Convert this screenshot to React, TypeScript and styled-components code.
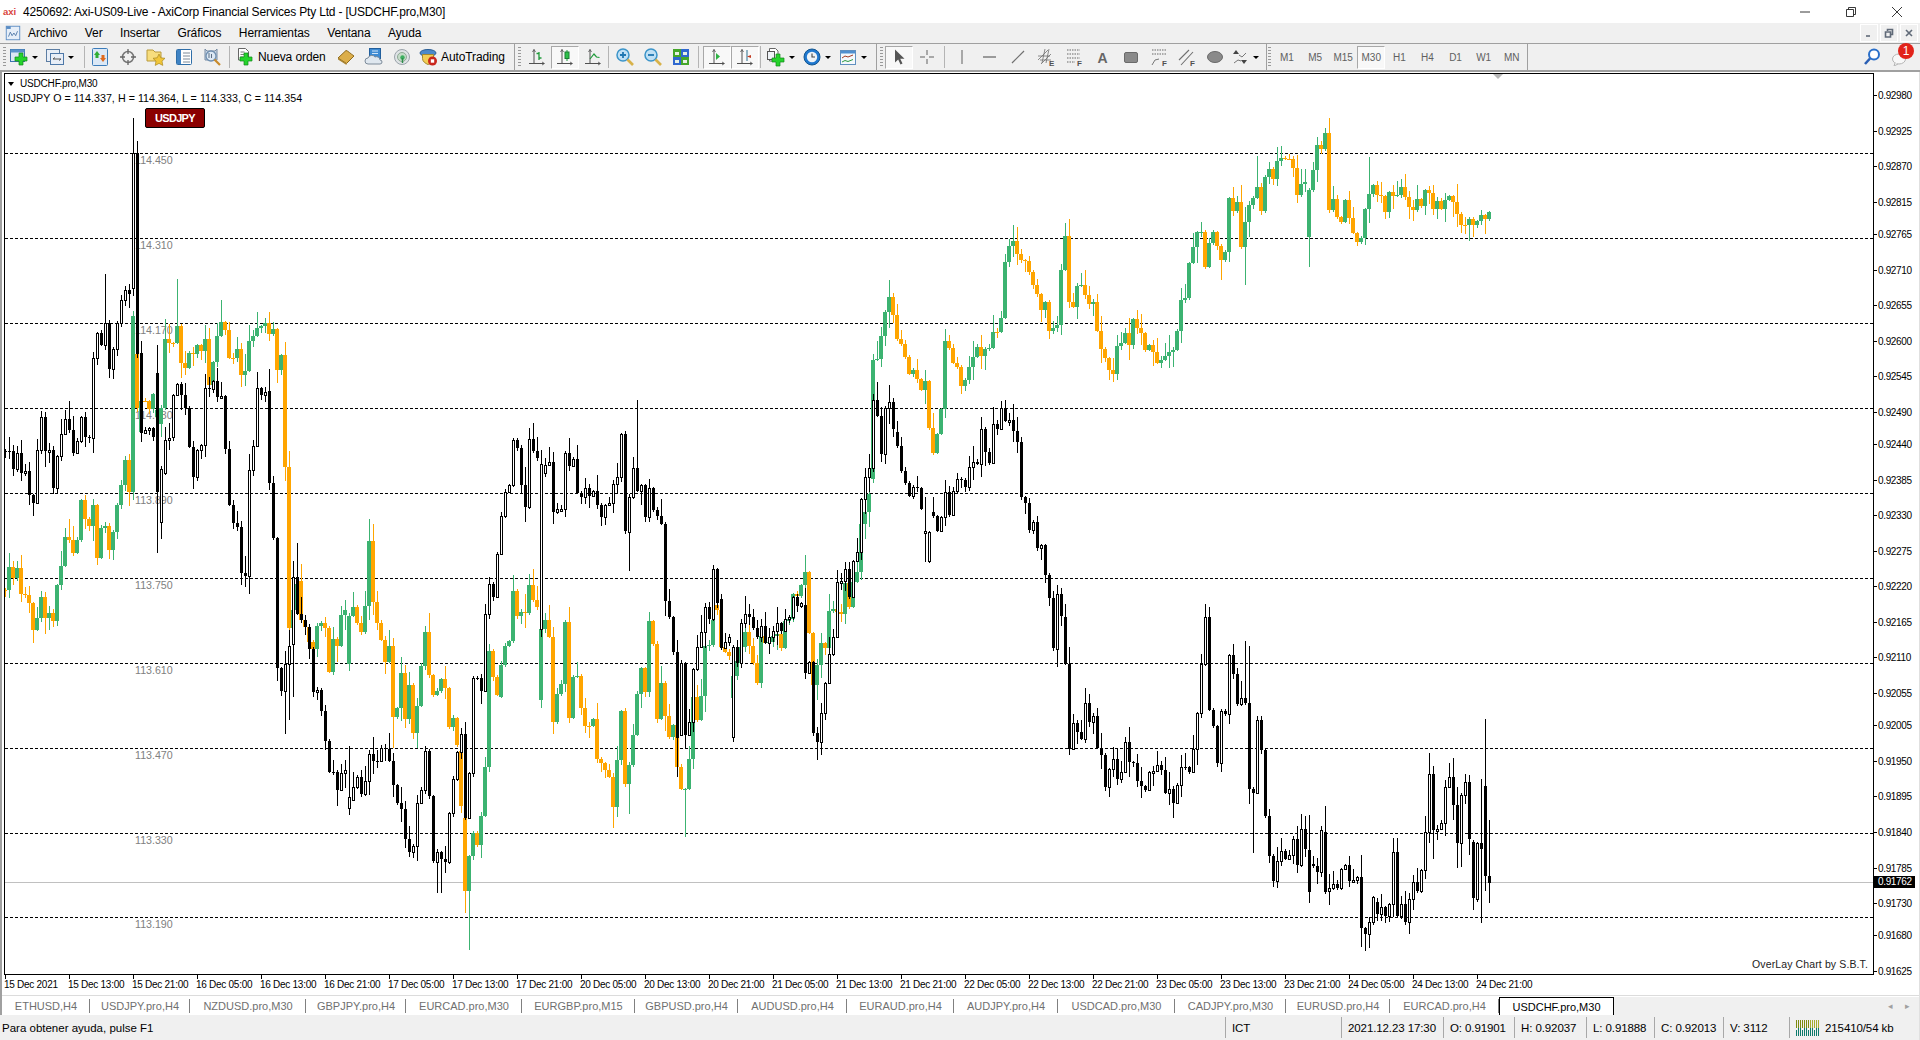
import React, { ReactNode } from 'react'
import styled, { createGlobalStyle } from 'styled-components'

const GlobalStyle = createGlobalStyle`
  html, body { margin: 0; padding: 0; background: #fff; }
  body { font-family: "Liberation Sans", Arial, sans-serif; color: #000; }
`

/* ---------- chart data ---------- */

type Cell = number | [number, number?, number?, number?] // close, open, high, low
type Bar = { x: number; c: number; o?: number; h?: number; l?: number }
const _ = undefined

// rows come from pixel reads of the chart: one bar every 4px, y scaled back to page pixels
const run = (firstX: number, y0: number, sy: number, rows: Cell[]): Bar[] =>
  rows.map((cell, i) => {
    const [c, o, h, l] = typeof cell === 'number' ? [cell] : cell
    const fix = (v?: number) => (v === undefined ? undefined : y0 + v / sy)
    return { x: firstX + 4 * i, c: fix(c)!, o: fix(o), h: fix(h), l: fix(l) }
  })

const rnd = (i: number) => {
  const v = Math.sin(i * 12.9898) * 43758.5453
  return v - Math.floor(v)
}

const colourMid = (): Bar[] => {
  const pts = [
    [716, 290], [722, 262], [726, 245], [730, 262], [735, 285], [740, 295], [750, 305], [755, 315], [762, 368],
    [768, 330], [772, 280], [778, 290], [785, 320], [790, 300], [800, 290], [810, 280], [818, 265], [822, 200],
    [826, 200], [832, 205], [838, 215], [845, 235], [850, 245], [856, 265], [862, 268], [870, 195], [874, 260],
    [880, 230], [888, 235], [895, 260], [900, 285], [905, 312], [912, 290], [920, 280], [928, 262], [935, 285],
    [945, 292], [955, 290], [962, 265], [968, 235], [975, 205], [978, 192],
  ].map(([x, y]) => [x * 1.2245, y * 1.2245])
  const bars: Bar[] = []
  for (let x = 877; x <= 1197; x += 4) {
    let j = 0
    while (j < pts.length - 2 && pts[j + 1][0] < x) j++
    const [x1, y1] = pts[j]
    const [x2, y2] = pts[j + 1]
    const y = y1 + ((y2 - y1) * (x - x1)) / (x2 - x1)
    bars.push({ x, c: y + (rnd(x) - 0.5) * 24 })
  }
  return bars
}

const colourBars: Bar[] = [
  ...run(5, 280, 2.306, [
    715, 662, 687, 665, 725, 727, 745, 807, 780, 730, 780, 768, 787, 703, 660, 593, 600, 630, 600, 507, 550, 567, 520,
    640, 573, 568, 622, 580, 520, 473, 415, 488, 82, [295, 170], [280, 350], 280, 298, 262, [300, 315], [295, 333],
    [137, _, 90], 145, 146, [105, _, -2], 192, 203, 168, 170, 150, 163, 135, 242, 188, 130, [97, _, 45], 115, 180, 181,
    160, 218, 210, 140, 130, 110, 105, 100, 125, 112, 207, 172, 432, 803, [760, 803], [700, 760], [785, 695], 800, 835,
    850, 797, 790, 803, 903, 828, 843, 772, 760, [775, 885], 755, 790, 812, 752, [602, _, 550], 742, 792, 830, 882, 845,
    [1007, _, _, 1080], 988, 907, 1013, 935, 1045, 982, 890, [812, _, 798], [910, _, 767], 957, 948, 920, 942, 1030,
    1010, 1073, [1213, 1085], [1410, 1240, _, 1460], [1328, _, _, 1545], 1275, 1302, 1235, 1122, 855, 915, 957,
    [888, 962], 845, 832, [718, _, 680], 775,
  ]),
  ...run(521, 380, 3, [
    697, 698, 615, 660, 680, [748, 960], 720, 770, 1025, 942, 912, 727, 1015, 892, 888, 985, 1037, 1038, 1018, 1138,
    1148, 1170, 1190, [1280, _, _, 1345], 1140, 993, 1212, [1155, _, _, 1303], 1065, 942, 865, 935, 723, 792, 1018, 910,
    1007, 1070, 1035, 1162, 1228, [1226, _, _, 1372], 1137, 950, 1020, 948, 797, 795, 720, [690, 675], 800, 815, 828,
    [888, 955], 843, [800, 850], 755, 797, 850, 908, 768, 790, 785, 768, 763, 803, 723, 718, 643, 648, 615, 575, 760,
    915, 855, 790, 805, 693, 688, 697, 702, 610, 680, 607, 575, 432, 397, 343, [-60, 297],
  ]),
  ...colourMid(),
  ...run(1201, 100, 3, [
    396, 500, 430, 396, 437, [480, _, _, 540], 455, 295, 333, 306, 440, [366, _, _, 555], 315, 294, [261, _, 168], 333, 232,
    207, 237, 183, [174, _, 138], 176, 177, 204, 285, 252, 246, [270, 410, _, 500], 210, 135, 147, [99, _, 85],
    [330, _, 55], 297, 350, 366, 300, 355, 399, 426, 415, 327, [282, _, 172], 255, 285, 287, 335, 276, 288, 284, 261,
    291, 321, 330, 297, 318, 270, 279, 327, 303, 327, 300, 288, 306, 342, 375, 375, 358, 375, 363, 345, 357, 336,
  ]),
]

const overlayBars: Bar[] = [
  ...run(5, 280, 2.306, [
    395, 395, 435, 400, 445, 440, 495, 515, 392, 315, 395, 392, 480, 405, 355, 320, 345, 400, 372, 315, 362, 365, 180,
    122, 150, [100, _, -14], 205, 160, 100, 46, 23, 32, [-293, 18, -374], [170, -293, -320], [352, 168], 345, 342, 362,
    [490, 215, 150, 630], [435, 557, _, 597], [368, 445], 365, [265, 362], 240, 265, 295, 385, 455, [392, 455], 380,
    250, 252, 232, 270, 268, 390, 520, 560, 570, 675, 682, [437, 682, _, 725], 383, 250, 265, 258, [468, 257, 205],
    595, 895, 947, [885, _, _, 1048], [845, _, _, 1015], [685, 840, _, 962], [770, 685, 607], 785, 800, 850, 950, 945,
    995, 1062, 1135, 1135, 1175, 1138, 1130, [1192, 1218, 1075], [1168, 1200], 1145, 1185, 1155, 1092, 1110, 1110,
    1080, 1082, 1110, 1165, 1205, 1220, 1288, 1318, 1305, 1205, 1175, 1085, 1190, 1340, [1320, 1342, _, 1413],
    [1335, 1320, _, 1413], 1343, 1228, 1150, 1088, 1048, [1240, 1048, 1020], 1138, 918, 918, 948, 770, 700, 730, 632,
    545, 490, 472, 368, 388,
  ]),
  ...run(521, 380, 3, [
    315, 380, 178, 212, 233, [253, 747], [255, 278], 247, 395, 388, 386, 220, 257, 238, 340, 352, 325, 347, 332, 375,
    410, 375, 370, 313, 292, 163, 452, [352, 455, _, 572], 265, [332, 265, 60], 316, 410, 325, 390, 407, 433, 662, 710,
    815, [1075, _, _, 1190], [850, 1065], [1065, 850], 1027, 868, 802, 757, 682, 718, 568, 668, [803, 658], 785, 770,
    [802, 1070, _, 1085], 848, 730, 703, 710, 743, 770, 737, 790, 770, 752, 730, 752, 718, 712, 650, 677, 670,
    [880, 676], 845, 1060, [1085, _, _, 1140], 1000, 910, 823, 770, 605, 604, 567, 650, 543, 515, 358, 292, 265, 60,
    107, 222, [85, 222], 67, 147, [197, 157], 272, 308, 347, 320, 325, 387, [452, 458, 350, 545], [457, 542], [407, 397],
    452, 412, 335, 405, 332, 298, 299, 320, 262, 247, 251, 148, 215, 248, 133, 147, 85, 122, 120, 152, 185,
  ]),
  ...run(1021, 0, 1, [[497, 442], 503, 530, 522, 548, 545, 575]),
  ...run(1049, 580, 3, [
    55, 205, [43, 208, _, 260], 107, [253, 112], 507, 428, 455, 477, 370, 425, 408, 503, 525, 620, 568, 538, 597, 575,
    487, 547, 548, 602, 617, 630, 575, 574, 556, 570, 638, 628, 670, 615, 562, 562, 575, 508, 400, 252,
    [112, _, 72], [390, _, 82], 437, 548, 392, 402, 225, 283, 372, 355, [368, _, 183], [627, 370, 198], [640, _, _, 818],
    420, 510, 707, 828, 902, 842, 812, 838, 826, 778, 855, 748, 808, [935, 810, 705, 968], [857, 853], 875, 750,
    [935, 755, 678], [925, 932, _, 975], 913, 923, 868, 855, 903, 899, 890, [1045, _, 825, 1100], [1063, _, _, 1112],
    1025, 952, [1002, 965], 980, 1008, 973, [817, _, 775], 1007, 973, 1025, 958, 907, 932, 870, [757, _, 708],
    [583, _, 520], [750, _, _, 838], 747, 730, 622, [590, _, 550], [675, _, 535], [788, _, _, 863], [645, _, _, 860], 607,
    [776, _, 585], [953, 787], [790, 958], [808, _, 597, 1028], [888, 618, 418], [908, _, 720, 968],
  ]),
]

const Candles = ({ bars, up, down, hollow }: { bars: Bar[]; up: string; down: string; hollow?: boolean }) => {
  let prev = bars[0].c
  return (
    <g shapeRendering="crispEdges">
      {bars.map((b, i) => {
        const x = 5 + 4 * Math.round((b.x - 5) / 4)
        const open = b.o ?? prev
        prev = b.c
        const top = Math.round(Math.min(open, b.c))
        const bottom = Math.round(Math.max(open, b.c))
        const rising = b.c < open
        const colour = hollow ? '#000' : rising ? up : down
        const high = Math.round(b.h ?? top - 1 - rnd(x + 0.3) ** 2 * 17)
        const low = Math.round(b.l ?? bottom + 1 + rnd(x + 0.7) ** 2 * 15)
        return (
          <g key={i}>
            <rect x={x} y={high} width={1} height={low - high} fill={colour} />
            {hollow ? (
              rising ? (
                <rect x={x - 0.5} y={top + 0.5} width={2} height={Math.max(bottom - top, 2)} fill="#fff" stroke="#000" />
              ) : (
                <rect x={x - 1} y={top} width={3} height={Math.max(bottom - top, 1)} fill={down} />
              )
            ) : (
              // the coloured series has touching bodies, 4px on a 4px step
              <rect x={x - 2} y={top} width={4} height={Math.max(bottom - top, 1)} fill={colour} />
            )}
          </g>
        )
      })}
    </g>
  )
}

const gridLines = [153, 238, 323, 408, 493, 578, 663, 748, 833, 917]
const overlayLabels = ['114.450', '114.310', '114.170', '114.030', '113.890', '113.750', '113.610', '113.470', '113.330', '113.190']

const prices = [
  '0.92980', '0.92925', '0.92870', '0.92815', '0.92765', '0.92710', '0.92655', '0.92600', '0.92545', '0.92490', '0.92440',
  '0.92385', '0.92330', '0.92275', '0.92220', '0.92165', '0.92110', '0.92055', '0.92005', '0.91950', '0.91895', '0.91840',
  '0.91785', '0.91730', '0.91680', '0.91625',
]
const priceTop = (p: string) => Math.round(832 + (0.9184 - parseFloat(p)) * 64651) - 73

const times = [
  '15 Dec 2021', '15 Dec 13:00', '15 Dec 21:00', '16 Dec 05:00', '16 Dec 13:00', '16 Dec 21:00', '17 Dec 05:00', '17 Dec 13:00',
  '17 Dec 21:00', '20 Dec 05:00', '20 Dec 13:00', '20 Dec 21:00', '21 Dec 05:00', '21 Dec 13:00', '21 Dec 21:00', '22 Dec 05:00',
  '22 Dec 13:00', '22 Dec 21:00', '23 Dec 05:00', '23 Dec 13:00', '23 Dec 21:00', '24 Dec 05:00', '24 Dec 13:00', '24 Dec 21:00',
]

const tabs: [string, number][] = [
  ['ETHUSD,H4', 88], ['USDJPY.pro,H4', 100], ['NZDUSD.pro,M30', 116], ['GBPJPY.pro,H4', 100], ['EURCAD.pro,M30', 116],
  ['EURGBP.pro,M15', 113], ['GBPUSD.pro,H4', 103], ['AUDUSD.pro,H4', 109], ['EURAUD.pro,H4', 107], ['AUDJPY.pro,H4', 104],
  ['USDCAD.pro,M30', 117], ['CADJPY.pro,M30', 111], ['EURUSD.pro,H4', 104], ['EURCAD.pro,H4', 109],
]

const statusCells: [string, number][] = [
  ['2021.12.23 17:30', 102], ['O: 0.91901', 71], ['H: 0.92037', 72], ['L: 0.91888', 68], ['C: 0.92013', 69], ['V: 3112', 66],
]

/* ---------- layout ---------- */

const Page = styled.div`
  width: 1920px;
  height: 1040px;
  display: flex;
  flex-direction: column;
  overflow: hidden;
  background: #fff;
`

const TitleBar = styled.div`
  height: 23px;
  display: flex;
  align-items: center;
  padding-left: 3px;
  font-size: 12px;
  background: #fff;
`

const AxiLogo = styled.span`
  width: 20px;
  font-size: 9.5px;
  font-weight: bold;
  color: #d9443c;
`

const TitleText = styled.span`
  flex: 1;
  letter-spacing: -0.19px;
`

const WindowControl = styled.button`
  width: 46px;
  height: 23px;
  border: 0;
  padding: 0;
  background: none;
  display: flex;
  align-items: center;
  justify-content: center;
`

const MenuBar = styled.div`
  height: 20px;
  display: flex;
  align-items: center;
  padding-left: 4px;
  background: #f0f0f0;
  border-bottom: 1px solid #a0a0a0;
  font-size: 12px;
`

const MenuItems = styled.div`
  flex: 1;
  display: flex;
  gap: 17.5px;
  padding-left: 6px;
  letter-spacing: -0.1px;
`

const MdiButton = styled.button`
  width: 18px;
  height: 18px;
  margin-right: 2px;
  border: 1px solid #fff;
  padding: 0;
  background: #f0f0f0;
  display: flex;
  align-items: center;
  justify-content: center;
`

const Toolbar = styled.div`
  height: 26px;
  display: flex;
  align-items: center;
  padding-left: 2px;
  background: #f0f0f0;
  border-bottom: 2px solid #a0a0a0;
  font-size: 12px;
`

const Grip = styled.i`
  width: 3px;
  height: 20px;
  margin: 0 2px 0 1px;
  flex: none;
  background: repeating-linear-gradient(#999 0 1px, #f0f0f0 1px 3px);
`

const Divider = styled.i<{ $ml: number; $mr: number; $strong?: boolean }>`
  width: 1px;
  height: ${(p) => (p.$strong ? 26 : 22)}px;
  flex: none;
  margin: 0 ${(p) => p.$mr}px 0 ${(p) => p.$ml}px;
  background: ${(p) => (p.$strong ? '#a0a0a0' : '#b4b4b4')};
`

const ToolButton = styled.div<{ $w?: number; $pressed?: boolean }>`
  width: ${(p) => p.$w ?? 28}px;
  height: 23px;
  box-sizing: border-box;
  display: flex;
  align-items: center;
  justify-content: center;
  flex: none;
  color: #606060;
  font-size: 10px;
  border: 1px solid ${(p) => (p.$pressed ? '#fff' : 'transparent')};
  border-top-color: ${(p) => (p.$pressed ? '#a8a8a8' : 'transparent')};
  border-left-color: ${(p) => (p.$pressed ? '#a8a8a8' : 'transparent')};
  background: ${(p) => (p.$pressed ? '#f8f8f8' : 'transparent')};
`

const LabelButton = styled.div<{ $w: number }>`
  width: ${(p) => p.$w}px;
  flex: none;
  display: flex;
  align-items: center;
  gap: 2px;
  padding-left: 3px;
  box-sizing: border-box;
  white-space: nowrap;
  letter-spacing: -0.1px;
`

const DropButton = styled.div<{ $w?: number }>`
  width: ${(p) => p.$w ?? 36}px;
  flex: none;
  display: flex;
  align-items: center;
  padding-left: 1px;
  box-sizing: border-box;
  gap: 3px;
`

const Caret = styled.i`
  width: 0;
  height: 0;
  border-left: 3px solid transparent;
  border-right: 3px solid transparent;
  border-top: 3px solid #000;
`

const ToolbarEnd = styled.div`
  margin-left: auto;
  display: flex;
  align-items: center;
  gap: 8px;
  padding-right: 8px;
`

const ChatButton = styled.div`
  position: relative;
  width: 22px;
  height: 22px;
`

const ChatBadge = styled.span`
  position: absolute;
  left: 8px;
  top: -3px;
  width: 16px;
  height: 16px;
  border-radius: 50%;
  background: #e2231a;
  color: #fff;
  font-size: 12px;
  line-height: 16px;
  text-align: center;
`

const ChartArea = styled.div`
  flex: 1;
  display: flex;
  flex-direction: column;
  padding-top: 1px;
  border-left: 2px solid #a0a0a0;
  border-right: 1px solid #e0e0e0;
`

const ChartRow = styled.div`
  display: flex;
  height: 902px;
  padding-left: 2px;
`

const ChartCanvas = styled.div`
  position: relative;
  width: 1868px;
  height: 900px;
  border: 1px solid #000;
  flex: none;
`

const ChartSvg = styled.svg`
  display: block;
`

const Legend = styled.div`
  position: absolute;
  left: 3px;
  top: 3px;
  font-size: 10.67px;
  line-height: 14px;
  letter-spacing: 0.05px;
`

const LegendTitle = styled.div`
  display: flex;
  align-items: center;
  gap: 6px;
  font-size: 10px;
  letter-spacing: -0.18px;

  &::before {
    content: '';
    border-left: 3.5px solid transparent;
    border-right: 3.5px solid transparent;
    border-top: 4px solid #000;
  }
`

const SymbolBadge = styled.div`
  position: absolute;
  left: 140px;
  top: 34px;
  width: 60px;
  height: 20px;
  box-sizing: border-box;
  border: 1px solid #000;
  border-radius: 2px;
  background: #8b0000;
  color: #fff;
  font-size: 11px;
  font-weight: bold;
  line-height: 18px;
  text-align: center;
  letter-spacing: -0.7px;
`

const ShiftMarker = styled.i`
  position: absolute;
  left: 1488px;
  top: 0;
  border-left: 5px solid transparent;
  border-right: 5px solid transparent;
  border-top: 5px solid #b8b8b8;
`

const Credit = styled.div`
  position: absolute;
  right: 5px;
  bottom: 4px;
  font-size: 10.5px;
  color: #222;
  letter-spacing: 0.12px;
`

const PriceAxis = styled.div`
  position: relative;
  flex: 1;
  font-size: 10px;
  letter-spacing: -0.35px;
`

const PriceTick = styled.div`
  position: absolute;
  left: 0;
  display: flex;
  align-items: center;
  gap: 1px;
  height: 12px;
  margin-top: -6px;

  &::before {
    content: '';
    width: 3px;
    height: 1px;
    background: #000;
  }
`

const CurrentPrice = styled.div`
  position: absolute;
  left: 0;
  width: 41px;
  height: 12px;
  margin-top: -6px;
  padding-left: 4px;
  box-sizing: border-box;
  background: #000;
  color: #fff;
  line-height: 12px;
`

const TimeAxis = styled.div`
  height: 20px;
  display: flex;
  padding-left: 3px;
  border-bottom: 1px solid #dcdcdc;
  font-size: 10px;
`

const TimeCell = styled.div`
  width: 64px;
  flex: none;
  display: flex;
  flex-direction: column;
  letter-spacing: -0.27px;
  white-space: nowrap;

  &::before {
    content: '';
    width: 1px;
    height: 4px;
    margin-left: 0;
    background: #000;
  }

  span {
    margin-left: -1px;
    line-height: 11px;
  }
`

const TabStrip = styled.div`
  height: 18px;
  margin-top: 1px;
  display: flex;
  align-items: stretch;
  font-size: 11px;
  background: #fff;
`

const Tab = styled.div<{ $w: number }>`
  width: ${(p) => p.$w}px;
  flex: none;
  box-sizing: border-box;
  display: flex;
  align-items: center;
  justify-content: center;
  color: #707070;
  white-space: nowrap;
  position: relative;

  &::after {
    content: '';
    position: absolute;
    right: 0;
    top: 2px;
    bottom: 2px;
    width: 1px;
    background: #808080;
  }
`

const ActiveTab = styled.div`
  width: 115px;
  flex: none;
  box-sizing: border-box;
  display: flex;
  align-items: center;
  justify-content: center;
  border: 1px solid #000;
  border-bottom: 0;
  background: #fff;
`

const TabRest = styled.div`
  flex: 1;
  display: flex;
  align-items: center;
  justify-content: flex-end;
  gap: 12px;
  padding-right: 9px;
  background: #f0f0f0;
  color: #a0a0a0;
  font-size: 9px;
`

const StatusBar = styled.div`
  height: 25px;
  margin-left: -2px;
  display: flex;
  align-items: center;
  background: #f0f0f0;
  font-size: 11.5px;
`

const StatusHint = styled.div`
  flex: 1;
  padding-left: 2px;
`

const StatusCell = styled.div<{ $w: number }>`
  width: ${(p) => p.$w}px;
  height: 21px;
  flex: none;
  box-sizing: border-box;
  display: flex;
  align-items: center;
  gap: 3px;
  padding-left: 6px;
  border-left: 1px solid #a8a8a8;
  letter-spacing: -0.1px;
  white-space: nowrap;
`

/* ---------- icons ---------- */

const Ico = ({ children, size = 20 }: { children: ReactNode; size?: number }) => (
  <svg width={size} height={size} viewBox="0 0 20 20" fill="none">
    {children}
  </svg>
)

const Plus = ({ x = 12, y = 13 }: { x?: number; y?: number }) => (
  <path
    d={`M${x - 2} ${y - 6}h4v4h4v4h-4v4h-4v-4h-4v-4h4z`}
    fill="#25d32c"
    stroke="#13881a"
    strokeWidth="0.7"
  />
)

const Axes = () => (
  <g stroke="#505050" strokeWidth="1">
    <path d="M7 2.500V17M2 16.500h15" />
    <path d="M5.500 5L7 2.500L8.500 5M15 15l2.500 1.500L15 18" strokeWidth="0.8" />
  </g>
)

const NewChartIcon = () => (
  <Ico>
    <rect x="1.500" y="2.500" width="14" height="12" fill="#dce7f5" stroke="#3c74ad" />
    <rect x="1.500" y="2.500" width="14" height="3" fill="#5b93cc" />
    <Plus x={12} y={12} />
  </Ico>
)

const ProfilesIcon = () => (
  <Ico>
    <rect x="1.500" y="2.500" width="13" height="12" fill="#e8eef7" stroke="#5c7da3" />
    <rect x="5.500" y="6.500" width="13" height="11" fill="#e8eef7" stroke="#4e78a8" />
    <path d="M8 12h8M8 12l2-1.500M16 12l-2 1.500" stroke="#555" />
  </Ico>
)

const MarketWatchIcon = () => (
  <Ico>
    <rect x="2.500" y="1.500" width="15" height="17" rx="1" fill="#dbe8f6" stroke="#3c7cba" />
    <path d="M7 4l3 4H8.500v3h-3V8H4z" fill="#2fae35" />
    <path d="M13 15l-3-4h1.500V8h3v3H16z" fill="#df6a1f" />
  </Ico>
)

const NavigatorIcon = () => (
  <Ico>
    <circle cx="10" cy="10" r="5.500" stroke="#777" strokeWidth="1.500" />
    <path d="M10 2v5M10 13v5M2 10h5M13 10h5" stroke="#666" strokeWidth="1.300" />
  </Ico>
)

const FolderStarIcon = () => (
  <Ico>
    <path d="M1 3h6l2 2h6v9H1z" fill="#f7dd7d" stroke="#b99a3d" />
    <path d="M13 7l1.800 3.800 4.200.5-3 2.900.8 4.200-3.800-2-3.800 2 .8-4.200-3-2.900 4.200-.5z" fill="#f1c63a" stroke="#a98820" strokeWidth="0.7" />
  </Ico>
)

const TerminalIcon = () => (
  <Ico>
    <rect x="2.500" y="2.500" width="15" height="15" rx="1" fill="#fff" stroke="#2f6ea8" />
    <rect x="3" y="3" width="4" height="14" fill="#3f83c4" />
    <path d="M9 6h7M9 9h7M9 12h7M9 15h7" stroke="#7d8a99" />
  </Ico>
)

const TesterIcon = () => (
  <Ico>
    <path d="M3 2l2 2h8l2-2v11H3z" fill="#c9d6e6" stroke="#778ba3" />
    <circle cx="9" cy="9" r="5" fill="#dce8f4" stroke="#6f8fb0" strokeWidth="1.300" />
    <path d="M12.500 12.500L18 18" stroke="#c98b2c" strokeWidth="2.200" />
    <path d="M7 6v5M9.500 7v4" stroke="#5b6e85" />
  </Ico>
)

const OrderIcon = () => (
  <Ico>
    <path d="M2.500 1.500h7l3 3V13h-10z" fill="#fff" stroke="#666" />
    <path d="M4.500 5h4M4.500 7.500h6M4.500 10h3" stroke="#7d7d7d" />
    <Plus x={10} y={12} />
  </Ico>
)

const BookIcon = () => (
  <Ico>
    <path d="M2 11L10 3.500c1.500 0 5 3.500 8 5.500l-7.500 7.500z" fill="#dcae4a" stroke="#8f6a1c" />
    <path d="M2 11l8.500 5.500V18L2 12.500z" fill="#a88330" />
  </Ico>
)

const ServerIcon = () => (
  <Ico>
    <rect x="5.500" y="1.500" width="11" height="10" fill="#3e8bd3" stroke="#225f9c" />
    <path d="M8 4h6M8 6.500h6" stroke="#cfe4f8" />
    <path d="M4 17a3 3 0 0 1 0-6 4 4 0 0 1 7-1 3.500 3.500 0 0 1 5 3 2 2 0 0 1 0 4z" fill="#dfe7ef" stroke="#7c8a99" />
  </Ico>
)

const SignalIcon = () => (
  <Ico>
    <circle cx="10" cy="10" r="7.500" fill="#dfe3e6" stroke="#9aa3aa" />
    <circle cx="10" cy="10" r="4.500" fill="#c6dcc9" stroke="#8fa995" />
    <circle cx="10.500" cy="10.500" r="2.200" fill="#3cae5f" />
    <path d="M10.500 11v5" stroke="#2d8c4b" strokeWidth="1.400" />
  </Ico>
)

const AutoTradingIcon = () => (
  <Ico>
    <ellipse cx="9" cy="6" rx="8" ry="3.500" fill="#4c89c9" stroke="#2a5d94" />
    <path d="M3.500 7.500h11v4c0 3-3 5-5.500 6-2.500-1-5.500-3-5.500-6z" fill="#f2cd55" stroke="#a4892c" />
    <circle cx="13.500" cy="14" r="4.500" fill="#c9261d" />
    <rect x="11.800" y="12.300" width="3.400" height="3.400" fill="#fff" />
  </Ico>
)

const BarChartIcon = () => (
  <Ico>
    <Axes />
    <path d="M12 5v8M12 11h2.500M12 6.500H9.500" stroke="#1f9a3a" strokeWidth="1.300" />
  </Ico>
)

const CandleIcon = () => (
  <Ico>
    <Axes />
    <path d="M12 3v11" stroke="#1f9a3a" />
    <rect x="10" y="5" width="4" height="6.500" fill="#2ec24a" stroke="#1a7f33" />
  </Ico>
)

const LineIcon = () => (
  <Ico>
    <Axes />
    <path d="M7 12l4-5 2.500 3 3 .5" stroke="#1f9a3a" strokeWidth="1.200" />
  </Ico>
)

const ZoomIcon = ({ plus }: { plus?: boolean }) => (
  <Ico>
    <circle cx="8" cy="8" r="6" fill="#bfe0f5" stroke="#3b94c9" strokeWidth="1.500" />
    <path d={plus ? 'M5 8h6M8 5v6' : 'M5 8h6'} stroke="#1f77b2" strokeWidth="1.800" />
    <path d="M12.500 12.500L18 18" stroke="#d8b24a" strokeWidth="2.600" />
  </Ico>
)

const TileIcon = () => (
  <Ico>
    <rect x="2" y="2" width="8" height="8" fill="#45a62a" />
    <rect x="10" y="2" width="8" height="8" fill="#2f67cf" />
    <rect x="2" y="10" width="8" height="8" fill="#2f67cf" />
    <rect x="10" y="10" width="8" height="8" fill="#45a62a" />
    <path d="M4 5h4v3H4zM12 5h4v3h-4zM4 13h4v3H4zM12 13h4v3h-4z" fill="#e7f0e4" />
  </Ico>
)

const ScrollIcon = () => (
  <Ico>
    <Axes />
    <path d="M9 6l4 3.500L9 13z" fill="#2fb344" />
  </Ico>
)

const ShiftIcon = () => (
  <Ico>
    <Axes />
    <path d="M12 3v11" stroke="#2a6f8f" />
    <path d="M16 8l-4 1.500 4 1.500z" fill="#c23b22" />
  </Ico>
)

const IndicatorIcon = () => (
  <Ico>
    <path d="M3.500 1.500h6l2.500 2.500v10h-8.500z" fill="#fff" stroke="#666" />
    <rect x="1.500" y="4.500" width="7" height="8" fill="#eef2f6" stroke="#555" />
    <Plus x={12} y={13} />
  </Ico>
)

const ClockIcon = () => (
  <Ico>
    <circle cx="10" cy="10" r="8" fill="#1f78cf" stroke="#14568f" />
    <circle cx="10" cy="10" r="5.200" fill="#eef3f7" />
    <path d="M10 6.500V10h3" stroke="#444" strokeWidth="1.100" />
  </Ico>
)

const TemplateIcon = () => (
  <Ico>
    <rect x="2.500" y="3.500" width="15" height="14" fill="#f4f8fc" stroke="#5f8fbf" />
    <rect x="3" y="4" width="14" height="2.500" fill="#4f8fcf" />
    <path d="M4 11l3-2 3 1 5-2" stroke="#a33a22" />
    <path d="M4 15l3-1.500 3 1 5-2" stroke="#2c9a41" />
  </Ico>
)

const CursorIcon = () => (
  <Ico>
    <path d="M6 2.500v13l3.200-3 2.300 5 2-1-2.300-4.700h4.300z" fill="#555" />
  </Ico>
)

const CrossIcon = () => (
  <Ico>
    <path d="M10 3v5M10 12v5M3 10h5M12 10h5" stroke="#606060" />
  </Ico>
)

const VLineIcon = () => (
  <Ico>
    <path d="M10 3v14" stroke="#606060" />
  </Ico>
)

const HLineIcon = () => (
  <Ico>
    <path d="M3 10h13" stroke="#606060" strokeWidth="1.200" />
  </Ico>
)

const TrendIcon = () => (
  <Ico>
    <path d="M4 16L16 4" stroke="#707070" strokeWidth="1.200" />
  </Ico>
)

const ToolLetter = styled.text`
  font-family: 'Liberation Sans', Arial, sans-serif;
  font-size: 8px;
  font-weight: bold;
  fill: #505050;
`

const ChannelIcon = () => (
  <Ico>
    <path d="M2 13L12 3M5 17L15 7M2 9h12M4 13h11M9 2l-3 14M13 2l-3 14" stroke="#707070" strokeWidth="0.8" />
    <ToolLetter x="13" y="19">E</ToolLetter>
  </Ico>
)

const FiboIcon = () => (
  <Ico>
    <path d="M3 3h13M3 7h13M3 11h13M3 15h8" stroke="#666" strokeDasharray="1.500 1" />
    <ToolLetter x="13" y="19">F</ToolLetter>
  </Ico>
)

const TextToolIcon = () => (
  <Ico>
    <text x="4.500" y="15.500" fontSize="14" fontWeight="bold" fontFamily="Liberation Sans, Arial, sans-serif" fill="#666">A</text>
  </Ico>
)

const RectToolIcon = () => (
  <Ico>
    <rect x="3.500" y="5.500" width="13" height="10" rx="1.500" fill="#8a8a8a" stroke="#6a6a6a" />
  </Ico>
)

const FanIcon = () => (
  <Ico>
    <path d="M3 3h14M3 7h14" stroke="#666" strokeDasharray="1.500 1" />
    <path d="M3 18l3-5 4-1" stroke="#777" />
    <ToolLetter x="13" y="19">F</ToolLetter>
  </Ico>
)

const ParallelIcon = () => (
  <Ico>
    <path d="M2 13L12 3M4 18L16 5" stroke="#707070" strokeWidth="1.100" />
    <ToolLetter x="13" y="19">F</ToolLetter>
  </Ico>
)

const EllipseIcon = () => (
  <Ico>
    <ellipse cx="10" cy="10" rx="7.500" ry="5.500" fill="#8a8a8a" stroke="#6a6a6a" />
  </Ico>
)

const ArrowsIcon = () => (
  <Ico>
    <path d="M3 7l3-4 3 4zM11 13l3 4 3-4z" fill="#444" />
    <path d="M4 16l4-3 3 1" stroke="#777" />
    <path d="M9 8l3 2 4-4" stroke="#777" />
  </Ico>
)

const SearchIcon = () => (
  <Ico>
    <circle cx="12" cy="7.500" r="5" stroke="#2a6fc9" strokeWidth="2" fill="#fff" />
    <path d="M8 11.500L3 17" stroke="#2a5fb4" strokeWidth="2.600" />
  </Ico>
)

const ChatIcon = () => (
  <Ico>
    <ellipse cx="9" cy="13" rx="6.500" ry="5" fill="#f8f8f8" stroke="#b4b4b4" />
    <path d="M5 17l-1 3 4-2" fill="#f8f8f8" stroke="#b4b4b4" />
  </Ico>
)

const MenuChartIcon = () => (
  <Ico size={18}>
    <rect x="2.500" y="2.500" width="15" height="15" fill="#e6eef8" stroke="#5a8cc4" />
    <rect x="2.500" y="2.500" width="5" height="3" fill="#5a8cc4" />
    <path d="M5 14l2-5 2 4 2-3 2 3 2-5" stroke="#5078a8" />
  </Ico>
)

const VolumeIcon = () => (
  <svg width="26" height="16" viewBox="0 0 26 16">
    {Array.from({ length: 12 }, (_, i) => (
      <React.Fragment key={i}>
        <rect x={i * 2} y={0} width={1} height={8} fill={i < 7 ? '#7d8a10' : '#a6ad2f'} />
        <rect x={i * 2} y={i % 3 === 0 ? 10 : 8} width={1} height={8} fill="#0d7a6b" />
      </React.Fragment>
    ))}
  </svg>
)

const WinIcon = ({ d }: { d: string }) => (
  <svg width="12" height="12" viewBox="0 0 12 12" fill="none">
    <path d={d} stroke="#222" strokeWidth="0.9" />
  </svg>
)

const MdiIcon = ({ d }: { d: string }) => (
  <svg width="10" height="10" viewBox="0 0 10 10" fill="none">
    <path d={d} stroke="#606a78" strokeWidth="1.600" />
  </svg>
)

/* ---------- page ---------- */

const periods = ['M1', 'M5', 'M15', 'M30', 'H1', 'H4', 'D1', 'W1', 'MN']

export default function App() {
  return (
    <Page>
      <GlobalStyle />
      <TitleBar>
        <AxiLogo>axi</AxiLogo>
        <TitleText>4250692: Axi-US09-Live - AxiCorp Financial Services Pty Ltd - [USDCHF.pro,M30]</TitleText>
        <WindowControl>
          <WinIcon d="M1 6h10" />
        </WindowControl>
        <WindowControl>
          <WinIcon d="M1.500 3.500h7v7h-7zM3.500 3.500v-2h7v7h-2" />
        </WindowControl>
        <WindowControl>
          <WinIcon d="M1 1l10 10M11 1L1 11" />
        </WindowControl>
      </TitleBar>

      <MenuBar>
        <MenuChartIcon />
        <MenuItems>
          <span>Archivo</span>
          <span>Ver</span>
          <span>Insertar</span>
          <span>Gráficos</span>
          <span>Herramientas</span>
          <span>Ventana</span>
          <span>Ayuda</span>
        </MenuItems>
        <MdiButton>
          <MdiIcon d="M2 8h4" />
        </MdiButton>
        <MdiButton>
          <MdiIcon d="M1.500 4h5v5h-5zM3.500 3V1.500h5v5H7" />
        </MdiButton>
        <MdiButton>
          <MdiIcon d="M2 2l6 6M8 2L2 8" />
        </MdiButton>
      </MenuBar>

      <Toolbar>
        <Grip />
        <DropButton>
          <NewChartIcon />
          <Caret />
        </DropButton>
        <DropButton>
          <ProfilesIcon />
          <Caret />
        </DropButton>
        <Divider $ml={4} $mr={1} />
        <ToolButton><MarketWatchIcon /></ToolButton>
        <ToolButton><NavigatorIcon /></ToolButton>
        <ToolButton><FolderStarIcon /></ToolButton>
        <ToolButton><TerminalIcon /></ToolButton>
        <ToolButton><TesterIcon /></ToolButton>
        <Divider $ml={3} $mr={3} />
        <LabelButton $w={99}>
          <OrderIcon />
          <span>Nueva orden</span>
        </LabelButton>
        <ToolButton><BookIcon /></ToolButton>
        <ToolButton><ServerIcon /></ToolButton>
        <ToolButton><SignalIcon /></ToolButton>
        <LabelButton $w={94}>
          <AutoTradingIcon />
          <span>AutoTrading</span>
        </LabelButton>
        <Divider $strong $ml={4} $mr={2} />
        <Grip />
        <ToolButton><BarChartIcon /></ToolButton>
        <ToolButton $pressed><CandleIcon /></ToolButton>
        <ToolButton><LineIcon /></ToolButton>
        <Divider $ml={1} $mr={2} />
        <ToolButton><ZoomIcon plus /></ToolButton>
        <ToolButton><ZoomIcon /></ToolButton>
        <ToolButton><TileIcon /></ToolButton>
        <Divider $ml={3} $mr={4} />
        <ToolButton $pressed><ScrollIcon /></ToolButton>
        <ToolButton $pressed><ShiftIcon /></ToolButton>
        <Divider $ml={1} $mr={4} />
        <DropButton><IndicatorIcon /><Caret /></DropButton>
        <DropButton><ClockIcon /><Caret /></DropButton>
        <DropButton><TemplateIcon /><Caret /></DropButton>
        <Divider $strong $ml={3} $mr={2} />
        <Grip />
        <ToolButton $pressed><CursorIcon /></ToolButton>
        <ToolButton><CrossIcon /></ToolButton>
        <Divider $ml={3} $mr={3} />
        <ToolButton $w={28.1}><VLineIcon /></ToolButton>
        <ToolButton $w={28.1}><HLineIcon /></ToolButton>
        <ToolButton $w={28.1}><TrendIcon /></ToolButton>
        <ToolButton $w={28.1}><ChannelIcon /></ToolButton>
        <ToolButton $w={28.1}><FiboIcon /></ToolButton>
        <ToolButton $w={28.1}><TextToolIcon /></ToolButton>
        <ToolButton $w={28.1}><RectToolIcon /></ToolButton>
        <ToolButton $w={28.1}><FanIcon /></ToolButton>
        <ToolButton $w={28.1}><ParallelIcon /></ToolButton>
        <ToolButton $w={28.1}><EllipseIcon /></ToolButton>
        <DropButton $w={34}><ArrowsIcon /><Caret /></DropButton>
        <Divider $strong $ml={3} $mr={0} />
        <Grip />
        {periods.map((p) => (
          <ToolButton key={p} $w={28.1} $pressed={p === 'M30'}>
            {p}
          </ToolButton>
        ))}
        <Divider $strong $ml={1} $mr={0} />
        <ToolbarEnd>
          <SearchIcon />
          <ChatButton>
            <ChatIcon />
            <ChatBadge>1</ChatBadge>
          </ChatButton>
        </ToolbarEnd>
      </Toolbar>

      <ChartArea>
        <ChartRow>
          <ChartCanvas>
            <ChartSvg width={1868} height={900} viewBox="5 74 1868 900">
              <g stroke="#000" strokeDasharray="3 2" shapeRendering="crispEdges">
                {gridLines.map((y) => (
                  <line key={y} x1={5} x2={1873} y1={y + 0.5} y2={y + 0.5} />
                ))}
              </g>
              <line x1={5} x2={1873} y1={882.5} y2={882.5} stroke="#c0c0c0" shapeRendering="crispEdges" />
              <g fontFamily="Liberation Sans, Arial, sans-serif" fontSize="10.67" fill="#808080">
                {overlayLabels.map((label, i) => (
                  <text key={label} x={135} y={gridLines[i] + 11}>
                    {label}
                  </text>
                ))}
              </g>
              <Candles bars={colourBars} up="#3cb371" down="#ffa500" />
              <Candles bars={overlayBars} up="#fff" down="#000" hollow />
            </ChartSvg>
            <Legend>
              <LegendTitle>USDCHF.pro,M30</LegendTitle>
              <div>USDJPY O = 114.337, H = 114.364, L = 114.333, C = 114.354</div>
            </Legend>
            <SymbolBadge>USDJPY</SymbolBadge>
            <ShiftMarker />
            <Credit>OverLay Chart by S.B.T.</Credit>
          </ChartCanvas>
          <PriceAxis>
            {prices.map((p) => (
              <PriceTick key={p} style={{ top: priceTop(p) }}>
                {p}
              </PriceTick>
            ))}
            <CurrentPrice style={{ top: 882 - 73 }}>0.91762</CurrentPrice>
          </PriceAxis>
        </ChartRow>

        <TimeAxis>
          {times.map((t) => (
            <TimeCell key={t}>
              <span>{t}</span>
            </TimeCell>
          ))}
        </TimeAxis>

        <TabStrip>
          {tabs.map(([name, w]) => (
            <Tab key={name} $w={w}>
              {name}
            </Tab>
          ))}
          <ActiveTab>USDCHF.pro,M30</ActiveTab>
          <TabRest>
            <span>◂</span>
            <span>▸</span>
          </TabRest>
        </TabStrip>

        <StatusBar>
          <StatusHint>Para obtener ayuda, pulse F1</StatusHint>
          <StatusCell $w={116}>ICT</StatusCell>
          {statusCells.map(([text, w]) => (
            <StatusCell key={text} $w={w}>
              {text}
            </StatusCell>
          ))}
          <StatusCell $w={130}>
            <VolumeIcon />
            215410/54 kb
          </StatusCell>
        </StatusBar>
      </ChartArea>
    </Page>
  )
}
